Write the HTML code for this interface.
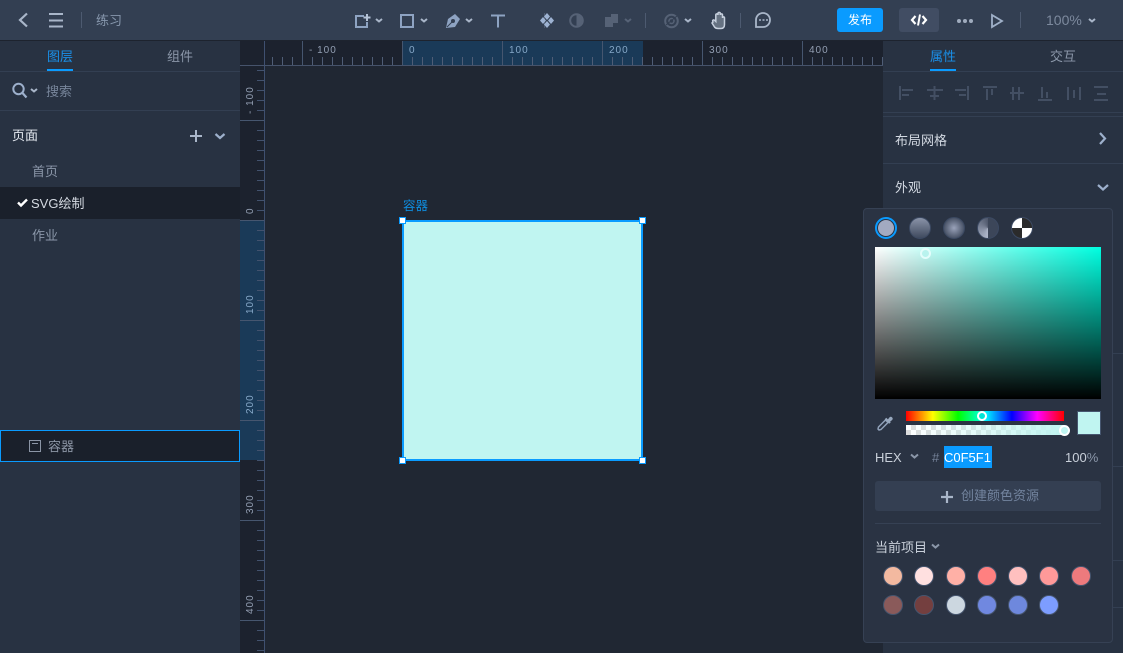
<!DOCTYPE html>
<html><head><meta charset="utf-8">
<style>
html,body{margin:0;padding:0;background:#202733}
#r{position:relative;width:1123px;height:653px;overflow:hidden;background:#202733;font-family:"Liberation Sans","Noto Sans CJK SC",sans-serif;font-size:13px;color:#8b97a9}
.a{position:absolute}
.t{position:absolute;white-space:nowrap;line-height:22px}
svg{position:absolute;overflow:visible}
.dot{position:absolute;width:18px;height:18px;border-radius:50%;border:1px solid #46556e}
.sw{position:absolute;width:20px;height:20px;border-radius:50%;border:1px solid #3c4a63;top:217px}
</style></head><body><div id="r">

<!-- top bar -->
<div class="a" style="left:0;top:0;width:1123px;height:40px;background:#333f52"></div>
<div class="a" style="left:0;top:40px;width:1123px;height:1px;background:#1d232e"></div>

<!-- left panel -->
<div class="a" style="left:0;top:41px;width:240px;height:612px;background:#283242"></div>
<!-- right panel -->
<div class="a" style="left:883px;top:41px;width:240px;height:612px;background:#283242"></div>

<!-- rulers -->
<svg style="left:0;top:0" width="1123" height="653" viewBox="0 0 1123 653" shape-rendering="crispEdges">
<defs>
<pattern id="hp" x="2" y="57" width="10" height="8" patternUnits="userSpaceOnUse"><rect width="1" height="8" fill="#4f5d76"/></pattern>
<pattern id="vp" x="257" y="0" width="7" height="10" patternUnits="userSpaceOnUse"><rect width="7" height="1" fill="#42526e"/></pattern>
</defs>
<rect x="240" y="41" width="643" height="24" fill="#1c222e"/>
<rect x="240" y="66" width="24" height="587" fill="#1c222e"/>
<rect x="403" y="41" width="240" height="24" fill="#1a3a58"/>
<rect x="240" y="220" width="24" height="240" fill="#1a3a58"/>
<rect x="264" y="57" width="619" height="8" fill="url(#hp)"/>
<rect x="257" y="66" width="7" height="587" fill="url(#vp)"/>
<rect x="240" y="65" width="643" height="1" fill="#46536b"/>
<rect x="264" y="41" width="1" height="612" fill="#3f5070"/>
<g fill="#46566f">
<rect x="302" y="41" width="1" height="24"/><rect x="402" y="41" width="1" height="24"/><rect x="502" y="41" width="1" height="24"/><rect x="602" y="41" width="1" height="24"/><rect x="702" y="41" width="1" height="24"/><rect x="802" y="41" width="1" height="24"/>
<rect x="240" y="120" width="24" height="1"/><rect x="240" y="220" width="24" height="1"/><rect x="240" y="320" width="24" height="1"/><rect x="240" y="420" width="24" height="1"/><rect x="240" y="520" width="24" height="1"/><rect x="240" y="620" width="24" height="1"/>
</g>
</svg>
<svg style="left:0;top:0" width="1123" height="653" viewBox="0 0 1123 653" font-family="Liberation Sans,sans-serif" font-size="10" letter-spacing="1" fill="#939fb3">
<text x="309" y="53">- 100</text><text x="409" y="53" fill="#86a8c8">0</text><text x="509" y="53" fill="#86a8c8">100</text><text x="609" y="53" fill="#86a8c8">200</text><text x="709" y="53">300</text><text x="809" y="53">400</text>
<text transform="translate(253,114) rotate(-90)">- 100</text>
<text transform="translate(253,214) rotate(-90)">0</text>
<text transform="translate(253,314) rotate(-90)" fill="#86a8c8">100</text>
<text transform="translate(253,414) rotate(-90)" fill="#86a8c8">200</text>
<text transform="translate(253,514) rotate(-90)">300</text>
<text transform="translate(253,614) rotate(-90)">400</text>
</svg>

<!-- top bar left -->
<svg style="left:0;top:0" width="130" height="40" fill="none" stroke="#a9b6c9">
<path d="M27 13.500l-7 6.500 7 6.500" stroke-width="2.200"/>
<path d="M49 14h14M49 20.500h14M49 26.500h14" stroke-width="2"/>
<path d="M81.500 12v16" stroke="#4d5a70"/>
</svg>
<span class="t" style="left:96px;top:10px;color:#8797ad">练习</span>

<!-- toolbar icons -->
<svg style="left:340px;top:0" width="440" height="40" fill="none" stroke="#8ea3c2">
<path d="M24 16h-8v11h11v-5" stroke-width="2"/>
<path d="M27 14v7M23.500 17.500h7" stroke-width="2" stroke="#b4c2d6"/>
<path d="M36 19l3 2.500 3-2.500" stroke-width="2" stroke="#a9b6c9"/>
<rect x="61" y="15" width="12" height="12" stroke-width="2"/>
<path d="M81 19l3 2.500 3-2.500" stroke-width="2" stroke="#a9b6c9"/>
<path d="M106 28l2-9 7-5 5 5-5 8z" fill="#8ea3c2" stroke="none"/>
<circle cx="113" cy="21" r="2" fill="#333f52" stroke="none"/>
<path d="M107 27l5-5" stroke="#333f52"/>
<path d="M126 19l3 2.500 3-2.500" stroke-width="2" stroke="#a9b6c9"/>
<path d="M151 15.500h14M158 15.500v12" stroke-width="2"/>
<path d="M204.500 13v15" stroke="#4d5a70"/>
<g fill="#9db2d2" stroke="none"><path d="M207 13l3 3.500-3 3.500-3-3.500zM207 21l3 3.500-3 3.500-3-3.500zM203 17l3 3.500-3 3.500-3-3.500zM211 17l3 3.500-3 3.500-3-3.500z"/></g>
<circle cx="236.500" cy="20.500" r="6.300" stroke="#566276" stroke-width="2"/>
<path d="M236.500 15a5.500 5.500 0 0 1 0 11z" fill="#566276" stroke="none"/>
<path d="M265 17h6v-3h7v9h-5v4h-8z" fill="#566276" stroke="none"/>
<path d="M285 19l3 2.500 3-2.500" stroke="#566276" stroke-width="2"/>
<path d="M305.500 13v15" stroke="#4d5a70"/>
<circle cx="331.500" cy="21" r="6.300" stroke="#566276" stroke-width="2"/>
<circle cx="331.500" cy="21" r="2.500" stroke="#566276" stroke-width="1.500"/>
<path d="M326 25l11-9" stroke="#333f52"/>
<path d="M345 19l3 2.500 3-2.500" stroke-width="2" stroke="#a9b6c9"/>
<path d="M372 23l2.500 4c1 1.300 2 1.500 3.500 1.500h3c2.500 0 3.500-1.500 3.500-4v-6.500c0-1.500-2-1.500-2 0v-3c0-1.500-2.200-1.500-2.200 0v-1.500c0-1.500-2.300-1.500-2.300 0v1.500c0-1.500-2.200-1.500-2.200 0v6.500l-1-1c-1.300-1.200-2.800-.3-1.800 1.500z" stroke="#c7d0de" stroke-width="1.500" fill="#c7d0de" fill-opacity=".35"/>
<path d="M400.500 13v15" stroke="#4d5a70"/>
<path d="M416 27v-7a7 7 0 0 1 7-7a7 7 0 0 1 7 7a7 7 0 0 1-7 7z" stroke="#a9b6c9" stroke-width="1.800"/>
<path d="M419 20h2M422.500 20h2M426 20h2" stroke="#a9b6c9" stroke-width="1.600"/>
</svg>

<!-- top right -->
<div class="a" style="left:837px;top:8px;width:46px;height:24px;background:#0a9bff;border-radius:3px"></div>
<span class="t" style="left:848px;top:9px;color:#fff;font-size:12px">发布</span>
<div class="a" style="left:899px;top:8px;width:40px;height:24px;background:#414d63;border-radius:3px"></div>
<svg style="left:899px;top:8px" width="224" height="24" fill="none" stroke="#fff">
<path d="M16.500 8l-3.500 4 3.500 4M23.500 8l3.500 4-3.500 4" stroke-width="2.200"/>
<path d="M21 6.500l-2 11" stroke-width="2"/>
<circle cx="60" cy="13" r="2" fill="#a0acbe" stroke="none"/><circle cx="66" cy="13" r="2" fill="#a0acbe" stroke="none"/><circle cx="72" cy="13" r="2" fill="#a0acbe" stroke="none"/>
<path d="M93 7l10 6-10 6z" stroke="#9fb0c8" stroke-width="1.800"/>
<path d="M121.500 4v16" stroke="#4d5a70"/>
<path d="M190 11l3 2.500 3-2.500" stroke="#a9b6c9" stroke-width="2"/>
</svg>
<span class="t" style="left:1046px;top:9px;color:#7d8a9e;font-size:14px">100%</span>

<!-- left tabs -->
<span class="t" style="left:47px;top:46px;color:#1a8fe8">图层</span>
<div class="a" style="left:47px;top:69px;width:26px;height:2px;background:#0a9bff"></div>
<span class="t" style="left:167px;top:46px;color:#8b97a9">组件</span>
<div class="a" style="left:0;top:71px;width:240px;height:1px;background:#333f52"></div>
<svg style="left:0;top:72px" width="240" height="80" fill="none" stroke="#9db0cc">
<circle cx="18.500" cy="17" r="5.200" stroke-width="2"/><path d="M22.500 21l4 4.500" stroke-width="2.200"/>
<path d="M31 17l3 2.500 3-2.500" stroke-width="2" stroke="#a9b6c9"/>
<path d="M190 64h12M196 58v12" stroke="#a9b6c9" stroke-width="2"/>
<path d="M215.500 62l4.500 4 4.500-4" stroke-width="2.200"/>
</svg>
<span class="t" style="left:46px;top:81px;color:#77859a">搜索</span>
<div class="a" style="left:0;top:110px;width:240px;height:1px;background:#333f52"></div>
<span class="t" style="left:12px;top:125px;color:#e3e8ef">页面</span>
<span class="t" style="left:32px;top:161px">首页</span>
<div class="a" style="left:0;top:187px;width:240px;height:32px;background:#1a202b"></div>
<svg style="left:17px;top:198px" width="12" height="12" fill="none" stroke="#fff"><path d="M1 4.500l3 3 6-6" stroke-width="2.400"/></svg>
<span class="t" style="left:31px;top:193px;color:#d5dae2">SVG绘制</span>
<span class="t" style="left:32px;top:225px">作业</span>
<div class="a" style="left:0;top:430px;width:240px;height:32px;box-sizing:border-box;background:#1a202b;border:1px solid #0a9bff"></div>
<svg style="left:29px;top:440px" width="13" height="13" fill="none" stroke="#8b95a6"><rect x=".5" y=".5" width="11" height="11"/><path d="M3 3.500h6"/></svg>
<span class="t" style="left:48px;top:436px;color:#8c95a5">容器</span>

<!-- canvas object -->
<span class="t" style="left:403px;top:195px;color:#0f8bdc;font-size:12.500px">容器</span>
<div class="a" style="left:402px;top:220px;width:241px;height:241px;box-sizing:border-box;background:#c0f5f1;border:2px solid #0a9bff"></div>
<div class="a" style="left:399px;top:217px;width:5px;height:5px;background:#fff;border:1px solid #0a9bff"></div>
<div class="a" style="left:639px;top:217px;width:5px;height:5px;background:#fff;border:1px solid #0a9bff"></div>
<div class="a" style="left:399px;top:457px;width:5px;height:5px;background:#fff;border:1px solid #0a9bff"></div>
<div class="a" style="left:639px;top:457px;width:5px;height:5px;background:#fff;border:1px solid #0a9bff"></div>

<!-- right tabs -->
<span class="t" style="left:930px;top:46px;color:#1a8fe8">属性</span>
<div class="a" style="left:930px;top:69px;width:26px;height:2px;background:#0a9bff"></div>
<span class="t" style="left:1050px;top:46px;color:#8b97a9">交互</span>
<div class="a" style="left:883px;top:71px;width:240px;height:1px;background:#333f52"></div>
<svg style="left:880px;top:80px" width="243" height="30" fill="none" stroke="#434f63" stroke-width="2" shape-rendering="crispEdges">
<path d="M20 6v14M22 10h11M22 15h7"/>
<path d="M54.500 6v14M47 10h16M50 16h9"/>
<path d="M88 6v14M75 10h11M79 15h7"/>
<path d="M103 7h14M107 9v11M112 9v6"/>
<path d="M130 13h14M133 7v13M139 7v13"/>
<path d="M158 20h14M162 7v11M167 12v6"/>
<path d="M188 7v13M194 10v8M200 7v13"/>
<path d="M214 7h14M217 14h9M214 20h14"/>
</svg>
<div class="a" style="left:883px;top:112px;width:240px;height:1px;background:#333f52"></div>
<div class="a" style="left:883px;top:116px;width:240px;height:1px;background:#333f52"></div>
<span class="t" style="left:895px;top:130px;color:#d3d9e2">布局网格</span>
<svg style="left:1097px;top:132px" width="12" height="14" fill="none" stroke="#9db0cc"><path d="M3 1l5 5.500-5 5.500" stroke-width="2.200"/></svg>
<div class="a" style="left:883px;top:163px;width:240px;height:1px;background:#333f52"></div>
<span class="t" style="left:895px;top:177px;color:#d3d9e2">外观</span>
<svg style="left:1096px;top:183px" width="14" height="10" fill="none" stroke="#9db0cc"><path d="M2 2l5 4.500 5-4.500" stroke-width="2.200"/></svg>
<div class="a" style="left:1113px;top:353px;width:10px;height:1px;background:#333f52"></div>
<div class="a" style="left:1113px;top:466px;width:10px;height:1px;background:#333f52"></div>
<div class="a" style="left:1113px;top:560px;width:10px;height:1px;background:#333f52"></div>
<div class="a" style="left:1113px;top:607px;width:10px;height:1px;background:#333f52"></div>

<!-- popup -->
<div class="a" style="left:863px;top:208px;width:250px;height:435px;box-sizing:border-box;background:#2a3343;border:1px solid #364154;border-radius:4px"></div>
<div class="a" style="left:875px;top:217px;width:22px;height:22px;box-sizing:border-box;border-radius:50%;border:2px solid #0a9bff;background:#2a3343"></div>
<div class="a" style="left:878px;top:220px;width:16px;height:16px;border-radius:50%;background:#a2aac1"></div>
<div class="sw" style="left:909px;background:linear-gradient(#8a93a8,#3f4a5e)"></div>
<div class="sw" style="left:943px;background:radial-gradient(circle closest-side,#9aa3ba,#4a5468)"></div>
<div class="sw" style="left:977px;background:conic-gradient(#3c4659 0 50%,#b0b8cc 50%,#4f586c 100%)"></div>
<div class="sw" style="left:1011px;background:conic-gradient(#2b2b2b 0 25%,#fff 25% 50%,#2b2b2b 50% 75%,#fff 75%)"></div>

<div class="a" style="left:875px;top:247px;width:226px;height:152px;background:linear-gradient(rgba(0,0,0,0),#000),linear-gradient(90deg,#fff,#00ffe1)"></div>
<div class="a" style="left:920px;top:248px;width:7px;height:7px;border-radius:50%;border:2px solid #e4fdfb;background:#b9f3ee"></div>

<svg style="left:876px;top:415px" width="18" height="18" fill="none" stroke="#8fa0b8"><path d="M3 15l-1-1 .5-2 7-7 2.500 2.500-7 7z" stroke-width="1.500"/><path d="M9.500 3.500l4.500 4.500" stroke-width="2.200" stroke="#98a8be"/><path d="M12 5.500l2-2.500c1-1 2.500.5 1.500 1.500L13 6.500z" fill="#98a8be" stroke-width="1.600" stroke="#98a8be"/></svg>
<div class="a" style="left:906px;top:411px;width:158px;height:10px;background:linear-gradient(90deg,#f00,#ff0 17%,#0f0 33%,#0ff 50%,#00f 67%,#f0f 83%,#f00)"></div>
<div class="a" style="left:906px;top:425px;width:158px;height:10px;background:linear-gradient(90deg,rgba(192,245,241,0),#c0f5f1),repeating-conic-gradient(#ddd 0 25%,#fff 25% 50%) 0 0/10px 10px"></div>
<div class="a" style="left:977px;top:411px;width:6px;height:6px;border-radius:50%;border:2px solid #fff;background:#00e6d8"></div>
<div class="a" style="left:1059px;top:425px;width:7px;height:7px;border-radius:50%;border:2px solid #fff;background:#c0f5f1"></div>
<div class="a" style="left:1077px;top:411px;width:22px;height:22px;background:#c0f5f1;border:1px solid #46566f"></div>

<span class="t" style="left:875px;top:447px;color:#c9d0da">HEX</span>
<svg style="left:909px;top:453px" width="12" height="8" fill="none" stroke="#8b97a9"><path d="M2 1.500l3.500 3 3.500-3" stroke-width="2"/></svg>
<span class="t" style="left:932px;top:447px;color:#76839a">#</span>
<div class="a" style="left:944px;top:446px;width:48px;height:22px;background:#0a9bff"></div>
<span class="t" style="left:944px;top:447px;color:#fff">C0F5F1</span>
<span class="t" style="left:1065px;top:447px;color:#c9d0da">100<span style="color:#8b97a9">%</span></span>

<div class="a" style="left:875px;top:481px;width:226px;height:30px;background:#343f52;border-radius:3px"></div>
<svg style="left:940px;top:490px" width="14" height="14" fill="none" stroke="#a9b6c9"><path d="M1 7h12M7 1v12" stroke-width="2.200"/></svg>
<span class="t" style="left:961px;top:485px;color:#73849f;font-size:13px">创建颜色资源</span>
<div class="a" style="left:875px;top:523px;width:226px;height:1px;background:#364154"></div>
<span class="t" style="left:875px;top:537px;color:#c9d0da">当前项目</span>
<svg style="left:930px;top:543px" width="12" height="8" fill="none" stroke="#8b97a9"><path d="M2 1.500l3.500 3 3.500-3" stroke-width="2"/></svg>

<div class="dot" style="left:883px;top:566px;background:#f3b9a0"></div>
<div class="dot" style="left:914px;top:566px;background:#ffe0e0"></div>
<div class="dot" style="left:946px;top:566px;background:#ffb0a6"></div>
<div class="dot" style="left:977px;top:566px;background:#ff8080"></div>
<div class="dot" style="left:1008px;top:566px;background:#ffc0bf"></div>
<div class="dot" style="left:1039px;top:566px;background:#ff9999"></div>
<div class="dot" style="left:1071px;top:566px;background:#ee7a7d"></div>
<div class="dot" style="left:883px;top:595px;background:#8a5a5a"></div>
<div class="dot" style="left:914px;top:595px;background:#743f3f"></div>
<div class="dot" style="left:946px;top:595px;background:#ccd7e0"></div>
<div class="dot" style="left:977px;top:595px;background:#7088e0"></div>
<div class="dot" style="left:1008px;top:595px;background:#6e88dd"></div>
<div class="dot" style="left:1039px;top:595px;background:#7d9dff"></div>

</div></body></html>
